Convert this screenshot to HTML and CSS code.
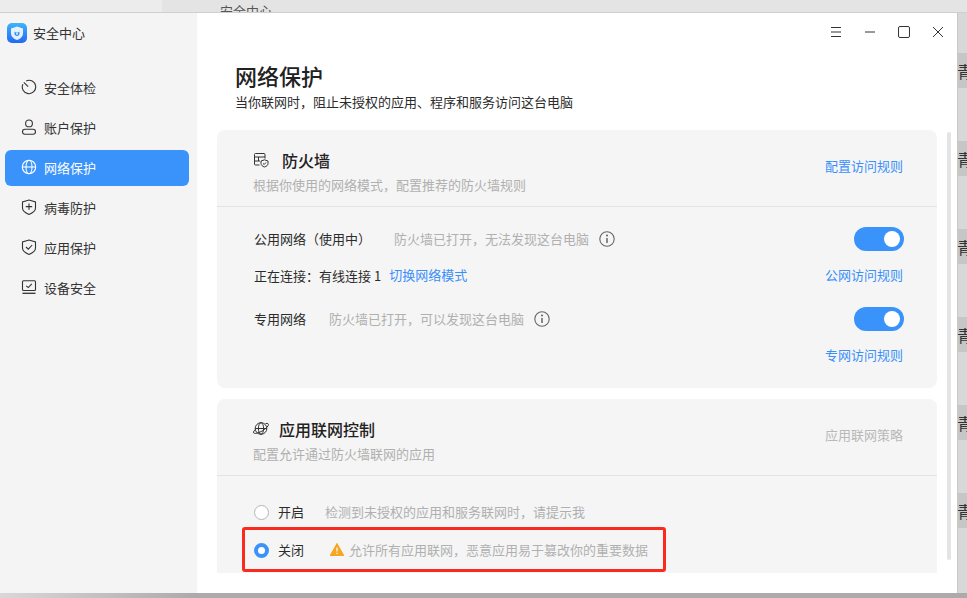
FILE: index.html
```html
<!DOCTYPE html>
<html>

	<head>
		<meta charset="UTF-8">
		<title>安全中心</title>
		<link rel="stylesheet" href="styles.css">
	</head>

	<body>
		<div class="topStrip">
			<div class="topLeft"></div>
			<div class="topRight"><span>安全中心</span></div>
		</div>
		<div class="middle">
			<div class="window">
				<div class="sidebar">
					<div class="appTitle">
						<svg class="appIcon" width="20" height="20" viewBox="0 0 20 20">
							<defs>
								<linearGradient id="appBg" x1="0" y1="0" x2="0" y2="1">
									<stop offset="0" stop-color="#3fb4f8" />
									<stop offset="1" stop-color="#2468f2" />
								</linearGradient>
							</defs>
							<rect width="20" height="20" rx="5" fill="url(#appBg)" />
							<path d="M10 3.500L16 5.500V10C16 13.500 13.500 15.800 10 17C6.500 15.800 4 13.500 4 10V5.500Z" fill="#e4f1ff" />
							<path d="M7.500 8.500V10.500C7.500 12 8.600 13 10 13C11.400 13 12.500 12 12.500 10.500V8.500L11.200 9.500H8.800Z" fill="#2f8bf6" />
							<circle cx="10" cy="10.800" r="1" fill="#e4f1ff" />
						</svg>
						<span>安全中心</span>
					</div>
					<ul class="nav">
						<li>
							<svg width="16" height="16" viewBox="0 0 16 16" fill="none" stroke="currentColor" stroke-width="1.100">
								<path d="M5.200 1.900A6.700 6.700 0 1 1 1.900 5.200" />
								<path d="M2.800 3.400L7.200 7.600" />
							</svg>
							安全体检
						</li>
						<li>
							<svg width="16" height="16" viewBox="0 0 16 16" fill="none" stroke="currentColor" stroke-width="1.100">
								<circle cx="8" cy="4.400" r="3.400" />
								<rect x="1.500" y="10.200" width="13" height="5" rx="2.500" />
							</svg>
							账户保护
						</li>
						<li class="current">
							<svg width="16" height="16" viewBox="0 0 16 16" fill="none" stroke="currentColor" stroke-width="1.100">
								<circle cx="8" cy="8" r="6.700" />
								<ellipse cx="8" cy="8" rx="3" ry="6.700" />
								<path d="M1.300 8H14.700" />
							</svg>
							网络保护
						</li>
						<li>
							<svg width="16" height="16" viewBox="0 0 16 16" fill="none" stroke="currentColor" stroke-width="1.100">
								<path d="M8 1L14.500 3V9C14.500 12 11.500 14 8 15.400C4.500 14 1.500 12 1.500 9V3Z" />
								<path d="M4.800 7.600H11.200M8 4.400V10.800" />
							</svg>
							病毒防护
						</li>
						<li>
							<svg width="16" height="16" viewBox="0 0 16 16" fill="none" stroke="currentColor" stroke-width="1.100">
								<path d="M8 1L14.500 3V9C14.500 12 11.500 14 8 15.400C4.500 14 1.500 12 1.500 9V3Z" />
								<path d="M5 8L7.300 10.200L11.200 6" />
							</svg>
							应用保护
						</li>
						<li>
							<svg width="16" height="16" viewBox="0 0 16 16" fill="none" stroke="currentColor" stroke-width="1.100">
								<rect x="1.500" y="1.800" width="13" height="9.700" rx="1" />
								<path d="M1.500 14.300H14.500" stroke-width="1.300" />
								<path d="M5.200 6.800L7.300 8.600L10.800 4.800" />
							</svg>
							设备安全
						</li>
					</ul>
				</div>
				<div class="main">
					<div class="controls">
						<svg width="12" height="12" viewBox="0 0 12 12" stroke="#333" fill="none">
							<path d="M1 1.500H11M1 6H11M1 10.500H11" />
						</svg>
						<svg width="12" height="12" viewBox="0 0 12 12" stroke="#333" fill="none">
							<path d="M1 6H11" />
						</svg>
						<svg width="12" height="12" viewBox="0 0 12 12" stroke="#333" fill="none">
							<rect x="0.500" y="0.500" width="11" height="11" rx="1.500" />
						</svg>
						<svg width="12" height="12" viewBox="0 0 12 12" stroke="#333" fill="none">
							<path d="M1 1L11 11M11 1L1 11" />
						</svg>
					</div>
					<div class="pageHead">
						<h1>网络保护</h1>
						<p>当你联网时，阻止未授权的应用、程序和服务访问这台电脑</p>
					</div>
					<div class="scrollArea">
						<div class="cards">
							<div class="card">
								<div class="cardHead">
									<div class="cardText">
										<div class="cardTitle wall">
											<svg width="16" height="16" viewBox="0 0 16 16" fill="none" stroke="#333" stroke-width="1">
												<path d="M6.500 13H2.500A1 1 0 0 1 1.500 12V2.500A1 1 0 0 1 2.500 1.500H11A1 1 0 0 1 12 2.500V6.500" />
												<path d="M1.500 5H12M5.500 5V9M1.500 9H7" />
												<path d="M11.500 7.800L15 9V11.500C15 13.300 13.500 14.300 11.500 15C9.500 14.300 8 13.300 8 11.500V9Z" />
												<path d="M10 11.400L11.200 12.500L13 10.500" />
											</svg>
											<h2>防火墙</h2>
										</div>
										<p class="gray">根据你使用的网络模式，配置推荐的防火墙规则</p>
									</div>
									<a class="link">配置访问规则</a>
								</div>
								<div class="netRows">
									<div class="netRow">
										<span class="netName wide">公用网络（使用中）</span>
										<span class="gray">防火墙已打开，无法发现这台电脑</span>
										<svg class="info" width="16" height="16" viewBox="0 0 16 16" fill="none" stroke="#666" stroke-width="1.100">
											<circle cx="8" cy="8" r="7.200" />
											<path d="M8 7V12" stroke-width="1.500" />
											<circle cx="8" cy="4.500" r="0.500" />
										</svg>
										<span class="toggle"></span>
									</div>
									<div class="netRow">
										<span>正在连接：有线连接 1</span>
										<a class="link switchMode">切换网络模式</a>
										<a class="link rowEnd">公网访问规则</a>
									</div>
									<div class="netRow">
										<span class="netName">专用网络</span>
										<span class="gray">防火墙已打开，可以发现这台电脑</span>
										<svg class="info" width="16" height="16" viewBox="0 0 16 16" fill="none" stroke="#666" stroke-width="1.100">
											<circle cx="8" cy="8" r="7.200" />
											<path d="M8 7V12" stroke-width="1.500" />
											<circle cx="8" cy="4.500" r="0.500" />
										</svg>
										<span class="toggle"></span>
									</div>
									<div class="netRow">
										<a class="link rowEnd">专网访问规则</a>
									</div>
								</div>
							</div>
							<div class="card">
								<div class="cardHead">
									<div class="cardText">
										<div class="cardTitle">
											<svg width="16" height="16" viewBox="0 0 16 16" fill="none" stroke="#333" stroke-width="1">
												<circle cx="8" cy="7.500" r="5.800" />
												<ellipse cx="8" cy="7.500" rx="2.600" ry="5.800" />
												<path d="M2.200 7.500H13.800" />
												<path d="M12.500 2.500C15 2 16 3 15.200 4.600C14 7 10 10 6 11.500C2.500 12.800 0.200 12.800 0.500 11C0.700 10 1.500 9.200 2.500 8.500" />
											</svg>
											<h2>应用联网控制</h2>
										</div>
										<p class="gray">配置允许通过防火墙联网的应用</p>
									</div>
									<a class="disabledLink">应用联网策略</a>
								</div>
								<div class="radios">
									<div class="radioRow">
										<span class="radio"></span>
										<span class="radioName">开启</span>
										<span class="gray">检测到未授权的应用和服务联网时，请提示我</span>
									</div>
									<div class="radioRow">
										<span class="radio on"></span>
										<span class="radioName">关闭</span>
										<svg class="warn" width="14" height="13" viewBox="0 0 14 13">
											<path d="M7 0.500L13.800 12.500H0.200Z" fill="#f5a623" stroke="#f5a623" stroke-linejoin="round" />
											<path d="M7 4.500V8.500M7 9.800V11" stroke="#fff" stroke-width="1.200" />
										</svg>
										<span class="gray">允许所有应用联网，恶意应用易于篡改你的重要数据</span>
									</div>
									<div class="redBox"></div>
								</div>
							</div>
						</div>
						<div class="scrollBar"></div>
					</div>
				</div>
			</div>
			<ul class="sideList">
				<li>青</li>
				<li>青</li>
				<li>青</li>
				<li>青</li>
				<li>青</li>
				<li>青</li>
			</ul>
		</div>
		<div class="bottomStrip"></div>
	</body>

</html>
```

FILE: styles.css
```css
* {
	margin: 0;
	padding: 0;
	list-style: none;
	box-sizing: border-box;
}

html,
body {
	width: 967px;
	height: 598px;
	overflow: hidden;
}

body {
	font-family: "Noto Sans CJK SC", "Liberation Sans", sans-serif;
	font-size: 13px;
	color: #2c2c2c;
	background: #ccc;
}

.topStrip {
	height: 13px;
	display: flex;
	border-bottom: 1px solid #cfcfcf;
	overflow: hidden;
}

.topLeft {
	width: 162px;
	background: #ececec;
}

.topRight {
	flex: 1;
	background: #e4e4e4;
	padding-left: 58px;
	line-height: 22px;
	font-size: 13px;
	color: #555;
}

.middle {
	display: flex;
	height: 580px;
}

.window {
	width: 958px;
	display: flex;
	border-right: 1px solid #c9c9c9;
	background: #fff;
	flex-shrink: 0;
}

.sidebar {
	width: 197px;
	background: #f4f4f4;
	padding: 0 8px 0 5px;
	flex-shrink: 0;
}

.appTitle {
	display: flex;
	align-items: center;
	height: 36px;
	margin-top: 1px;
	padding-left: 2px;
	gap: 6px;
	font-size: 13px;
	color: #333;
}

.appIcon {
	margin-top: 2px;
}

.nav {
	margin-top: 20px;
}

.nav li {
	height: 36px;
	margin-bottom: 4px;
	display: flex;
	align-items: center;
	gap: 7px;
	padding: 0 0 2px 16px;
	border-radius: 6px;
	color: #333;
}

.nav li.current {
	background: #3a92fb;
	color: #fff;
}

.main {
	flex: 1;
	display: flex;
	flex-direction: column;
	min-width: 0;
}

.controls {
	height: 38px;
	display: flex;
	justify-content: flex-end;
	align-items: center;
	gap: 22px;
	padding-right: 13px;
}

.pageHead {
	padding-left: 38px;
	height: 79px;
}

.pageHead h1 {
	font-size: 22px;
	font-weight: 500;
	line-height: 30px;
	margin-top: 9px;
	margin-bottom: 2px;
	color: #222;
}

.pageHead p {
	line-height: 20px;
}

.scrollArea {
	flex: 1;
	display: flex;
	min-height: 0;
	height: 443px;
	overflow: hidden;
	padding-left: 20px;
}

.cards {
	width: 720px;
	height: 443px;
	overflow: hidden;
	flex-shrink: 0;
}

.card {
	position: relative;
	background: #f5f5f5;
	border-radius: 8px;
	margin-bottom: 11px;
}

.cardHead {
	height: 77px;
	border-bottom: 1px solid #e3e3e3;
	display: flex;
	justify-content: space-between;
	padding: 18px 34px 0 36px;
}

.cardHead .link,
.cardHead .disabledLink {
	margin-top: 2px;
}

.cardTitle {
	display: flex;
	align-items: center;
	gap: 10px;
	height: 24px;
}

.cardTitle.wall {
	gap: 13px;
}

.cardTitle h2 {
	font-size: 16px;
	font-weight: 500;
	color: #222;
}

.cardText .gray {
	margin-top: 2px;
	line-height: 22px;
}

.gray {
	color: #b0b0b0;
}

.link {
	color: #3a8ffa;
	line-height: 32px;
}

.disabledLink {
	color: #b8b8b8;
	line-height: 32px;
}

.netRows {
	height: 181px;
	padding: 19px 33px 0 37px;
}

.netRow {
	display: flex;
	align-items: center;
	height: 24px;
	margin-bottom: 13px;
}

.netRow:nth-child(2) {
	margin-bottom: 19px;
}

.netName {
	width: 75px;
}

.netName.wide {
	width: 140px;
}

.info {
	margin: 2px 0 0 10px;
}

.switchMode {
	margin-left: 8px;
}

.toggle,
.rowEnd {
	margin-left: auto;
}

.rowEnd {
	margin-right: 1px;
}

.toggle {
	position: relative;
	width: 50px;
	height: 24px;
	margin-top: 2px;
	border-radius: 12px;
	background: #3a92fb;
}

.toggle::after {
	content: "";
	position: absolute;
	right: 4px;
	top: 4px;
	width: 16px;
	height: 16px;
	border-radius: 50%;
	background: #fff;
}

.radios {
	position: relative;
	height: 110px;
	padding: 24px 0 0 37px;
}

.radioRow {
	display: flex;
	align-items: center;
	height: 22px;
	margin-bottom: 16px;
}

.radio {
	width: 15px;
	height: 15px;
	margin-top: 2px;
	border-radius: 50%;
	border: 1px solid #b5b5b5;
	background: #fff;
}

.radio.on {
	border: 4px solid #3a92fb;
}

.radioName {
	margin-left: 9px;
	width: 47px;
}

.warn {
	margin-right: 5px;
	margin-left: 5px;
}

/* annotation drawn over the screenshot */
.redBox {
	position: absolute;
	left: 25px;
	top: 51px;
	width: 424px;
	height: 45px;
	border: 3px solid #fb2a1e;
	border-radius: 3px;
}

.scrollBar {
	width: 4px;
	height: 428px;
	margin: 2px 0 0 10px;
	border-radius: 2px;
	background: #e4e4e4;
	flex-shrink: 0;
}

.sideList {
	flex: 1;
	overflow: hidden;
	background: #d8d8d8;
	padding-top: 40px;
	line-height: 36px;
	font-size: 16px;
	color: #333;
}

.sideList li {
	height: 35px;
	margin-bottom: 53px;
	background: #c6c6c6;
	white-space: nowrap;
	text-indent: -1px;
}

.bottomStrip {
	height: 5px;
	background: linear-gradient(to right, #d8d8d8, #ababab 20%, #ababab);
}
```
